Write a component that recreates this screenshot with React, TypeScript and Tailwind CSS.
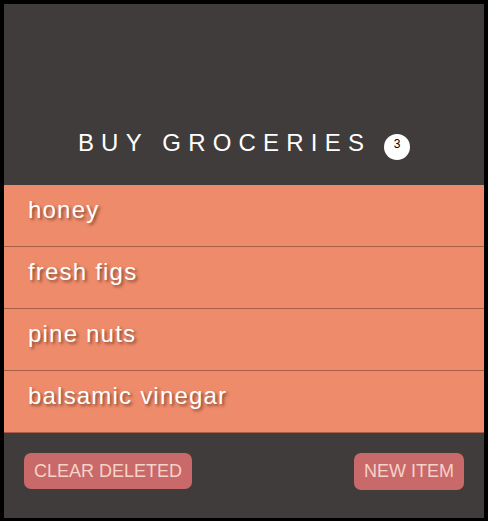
import React from "react";

const items = ["honey", "fresh figs", "pine nuts", "balsamic vinegar"];

export default function App() {
  return (
    <div className="h-[521px] w-[488px] bg-black pt-[4px] pb-[3px] pl-[4px] pr-[4px] font-['Liberation_Sans',Arial,sans-serif]">
      <div className="flex h-full flex-col bg-[#403c3b]">
        <header className="flex h-[181px] shrink-0 items-end justify-center pb-[25px]">
          <h1 className="flex items-start text-[24px] leading-[28px] tracking-[0.3em] text-white">
            <span>BUY GROCERIES</span>
            <span className="ml-[13px] mt-[5px] flex h-[26px] w-[26px] justify-center rounded-full bg-white pt-[4px] text-[12px] leading-[12px] tracking-normal text-black">
              3
            </span>
          </h1>
        </header>
        <ul className="bg-[#ed8b6b]">
          {items.map((item) => (
            <li
              key={item}
              className="h-[62px] border-b border-[#a85e47] pl-[24px] pt-[11px] text-[24px] leading-[28px] tracking-[1.2px] text-white [text-shadow:2px_2px_3px_#8c4a33]"
            >
              {item}
            </li>
          ))}
        </ul>
        <footer className="flex items-start justify-between px-[20px] pt-[20px]">
          <button
            type="button"
            className="h-[36px] rounded-[7px] bg-[#c96969] px-[10px] text-[18px] text-[#f6d3c8]"
          >
            CLEAR DELETED
          </button>
          <button
            type="button"
            className="h-[37px] rounded-[7px] bg-[#c96969] px-[10px] text-[18px] text-[#f6d3c8]"
          >
            NEW ITEM
          </button>
        </footer>
      </div>
    </div>
  );
}
